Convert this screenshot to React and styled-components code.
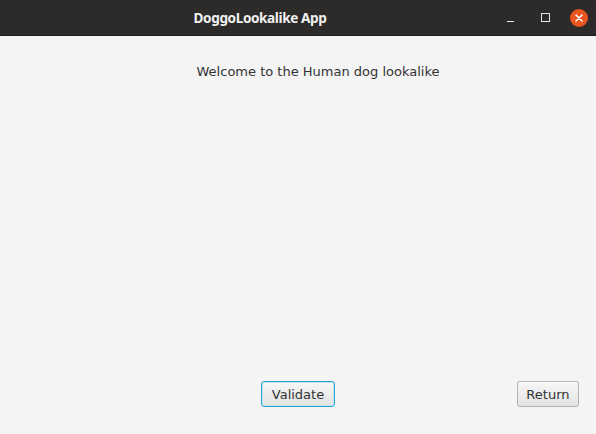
import React from "react";
import styled, { createGlobalStyle } from "styled-components";

const Global = createGlobalStyle`
  html, body { margin: 0; padding: 0; background: #f4f4f4; }
  #root { height: 434px; }
`;

const Window = styled.div`
  width: 596px;
  height: 434px;
  display: flex;
  flex-direction: column;
  background: #f4f4f4;
  font-family: "DejaVu Sans", sans-serif;
  overflow: hidden;
`;

const TitleBar = styled.div`
  height: 36px;
  flex: none;
  background: #2c2b2a;
  display: flex;
  align-items: center;
  border-bottom: 1px solid #1f1e1d;
  box-sizing: border-box;
`;

const Title = styled.div`
  flex: 1;
  text-align: center;
  padding-left: 28px;
  color: #f0f0f0;
  font-family: "Noto Sans", sans-serif;
  font-weight: bold;
  font-size: 13.6px;
  letter-spacing: -0.4px;
  padding-bottom: 1px;
`;

const Controls = styled.div`
  width: 104px;
  flex: none;
  display: flex;
  align-items: center;
  box-sizing: border-box;
  padding-left: 15px;
`;

const Minimize = styled.div`
  width: 7px;
  height: 1px;
  background: #e6e6e6;
  margin-top: 7px;
`;

const Maximize = styled.div`
  width: 7px;
  height: 7px;
  border: 1px solid #e6e6e6;
  margin-left: 27px;
`;

const CloseCircle = styled.div`
  width: 18px;
  height: 18px;
  margin-left: 20px;
  border-radius: 50%;
  background: #e9541f;
  display: flex;
  align-items: center;
  justify-content: center;
`;

const Content = styled.div`
  flex: 1;
  display: flex;
  flex-direction: column;
  padding: 28px 17px 27px;
`;

const Welcome = styled.div`
  text-align: center;
  color: #333333;
  font-size: 13px;
  padding-left: 40px;
`;

const Spacer = styled.div`
  flex: 1;
`;

const ButtonRow = styled.div`
  display: grid;
  grid-template-columns: 1fr auto 1fr;
  align-items: center;
`;

const Button = styled.button`
  grid-column: ${(p) => p.$col};
  justify-self: ${(p) => (p.$col === 3 ? "end" : "center")};
  height: 26px;
  padding: 0 ${(p) => p.$pad}px;
  font-family: "DejaVu Sans", sans-serif;
  font-size: 13px;
  color: #333333;
  background: linear-gradient(#f7f7f7, #e2e2e2);
  border: 1px solid ${(p) => (p.$focused ? "#2aa3d4" : "#b4b4b4")};
  box-shadow: ${(p) =>
    p.$focused ? "inset 0 0 0 1px #bfe4f3" : "inset 0 1px 0 #fbfbfb"};
  border-radius: 3px;
  box-sizing: border-box;
  cursor: default;
`;

export default function App() {
  return (
    <>
      <Global />
      <Window>
        <TitleBar>
          <Title>DoggoLookalike App</Title>
          <Controls>
            <Minimize />
            <Maximize />
            <CloseCircle>
              <svg width="10" height="10" viewBox="0 0 10 10">
                <path d="M2 2 L8 8 M8 2 L2 8" stroke="#ffffff" strokeWidth="1.5" strokeLinecap="round" />
              </svg>
            </CloseCircle>
          </Controls>
        </TitleBar>
        <Content>
          <Welcome>Welcome to the Human dog lookalike</Welcome>
          <Spacer />
          <ButtonRow>
            <Button $col={2} $pad={9.5} $focused>Validate</Button>
            <Button $col={3} $pad={8.5}>Return</Button>
          </ButtonRow>
        </Content>
      </Window>
    </>
  );
}
